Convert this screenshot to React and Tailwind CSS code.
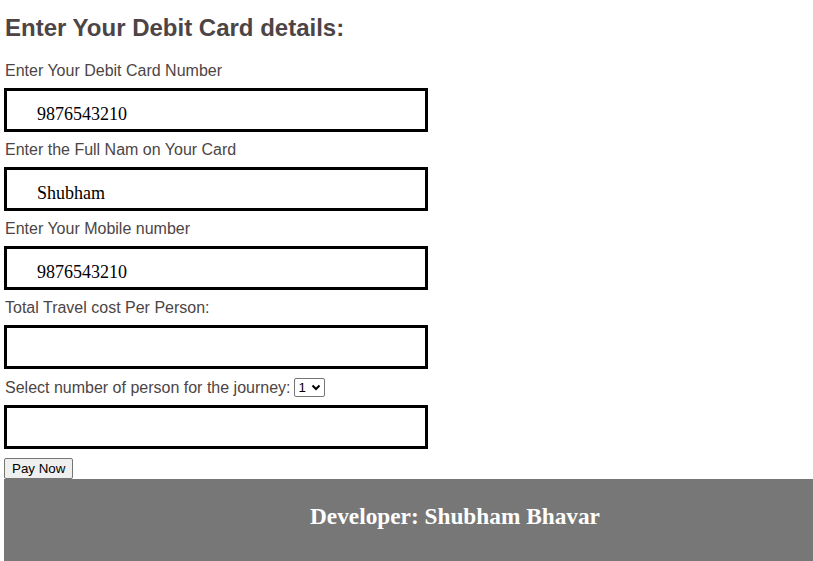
import React from 'react'

const fields = [
  { label: 'Enter Your Debit Card Number', value: '9876543210' },
  { label: 'Enter the Full Nam on Your Card', value: 'Shubham' },
  { label: 'Enter Your Mobile number', value: '9876543210' },
  { label: 'Total Travel cost Per Person:', value: '' },
]

const Box = ({ value }) => (
  <input
    type="text"
    defaultValue={value}
    className="block w-[424px] h-[44px] border-[3px] border-black pl-[30px] pt-[8px] text-[18px] text-black outline-none"
    style={{ fontFamily: '"Liberation Serif", "Times New Roman", serif' }}
  />
)

export default function App() {
  return (
    <div className="min-h-[561px] bg-white pl-[4px] font-['Liberation_Sans',Arial,sans-serif] text-[#4d4545]">
      <h2 className="pt-[14px] pl-[1px] text-[24px] leading-[28px] font-bold">Enter Your Debit Card details:</h2>

      <div className="mt-[20px]">
        {fields.map((f, i) => (
          <div key={i}>
            <div className={`${i === 0 ? '' : 'mt-[9px]'} pl-[1px] text-[16px] leading-[18px]`}>{f.label}</div>
            <div className="mt-[8px]"><Box value={f.value} /></div>
          </div>
        ))}

        <div className="mt-[9px] flex items-center pl-[1px] text-[16px] leading-[18px]">
          <span>Select number of person for the journey:</span>
          <span className="ml-[3px] inline-flex items-center h-[19px] border border-[#767676] rounded-[2px] pl-[4px] pr-[3px] text-black">
            <select className="appearance-none bg-transparent text-[13.33px] leading-[17px] outline-none pr-[4px]">
              <option>1</option>
              <option>2</option>
              <option>3</option>
              <option>4</option>
            </select>
            <svg width="10" height="7" viewBox="0 0 10 7" fill="none">
              <path d="M1.5 1.5L5 5L8.5 1.5" stroke="#000" strokeWidth="2" />
            </svg>
          </span>
        </div>
        <div className="mt-[8px]"><Box value="" /></div>

        <button className="mt-[9px] block h-[21px] px-[7px] bg-[#efefef] border border-[#767676] rounded-[2px] text-[13.33px] leading-[15px] text-black">
          Pay Now
        </button>
      </div>

      <footer className="h-[82px] bg-[#777777] pl-[306px] pt-[20px]">
        <p className="text-[23.3px] font-bold text-white" style={{ fontFamily: '"Liberation Serif", "Times New Roman", serif' }}>
          Developer: Shubham Bhavar
        </p>
      </footer>
    </div>
  )
}
